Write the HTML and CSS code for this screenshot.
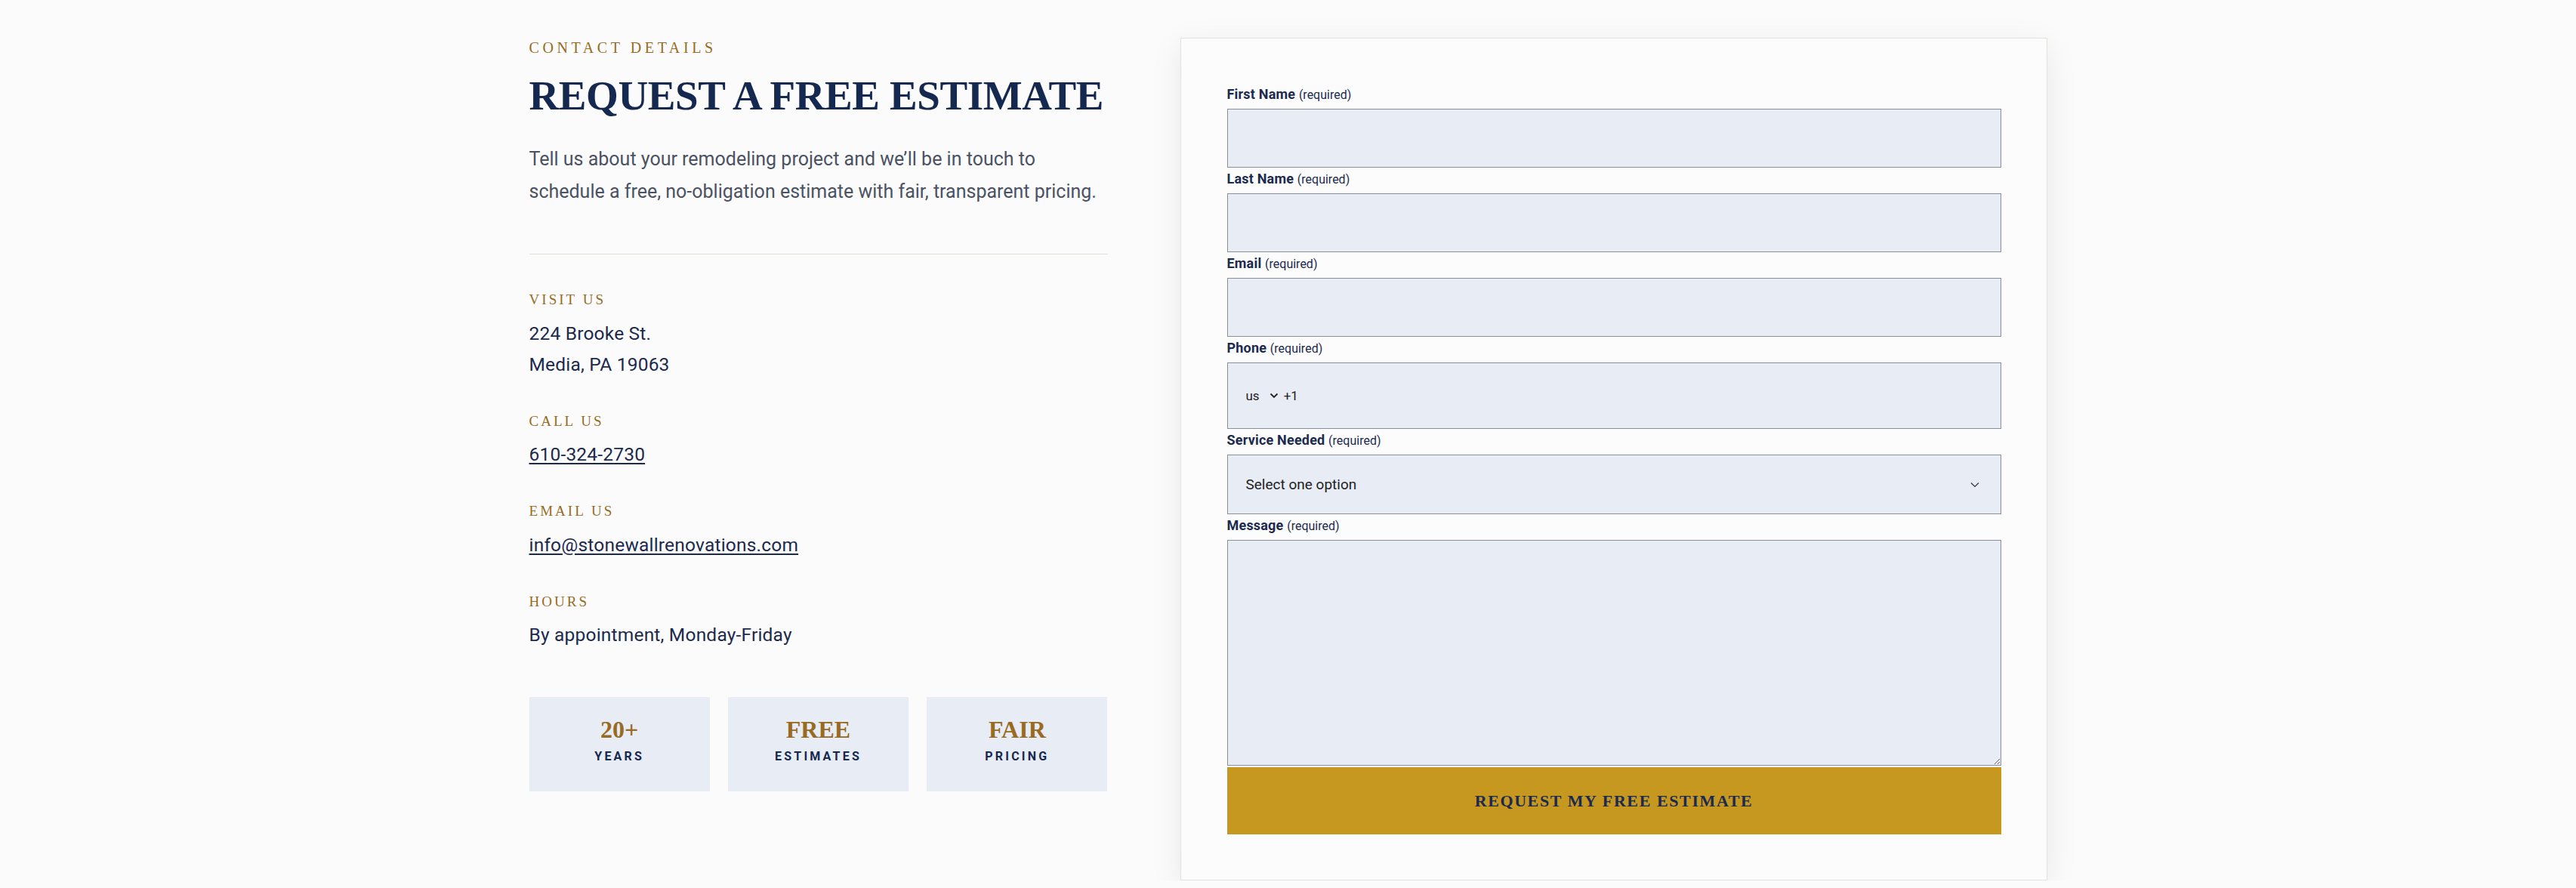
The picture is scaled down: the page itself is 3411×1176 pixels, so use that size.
FILE: index.html
```html
<!DOCTYPE html>
<html lang="en">
<head>
  <meta charset="UTF-8">
  <meta name="viewport" content="width=device-width, initial-scale=1.0">
  <title>Stonewall Renovations | Request a Free Estimate</title>
  <link rel="stylesheet" href="styles.css">
</head>

<body>
  <main class="estimate">
    <div class="estimate-inner">

      <!-- left: contact details -->
      <section class="contact">
        <p class="eyebrow">Contact Details</p>
        <h1 class="title">Request a Free Estimate</h1>
        <p class="intro">Tell us about your remodeling project and we’ll be in touch to schedule a free, no-obligation estimate with fair, transparent pricing.</p>

        <hr class="divider">

        <div class="info">
          <h3 class="info-label">Visit Us</h3>
          <p class="info-value">224 Brooke St.<br>Media, PA 19063</p>
        </div>
        <div class="info">
          <h3 class="info-label">Call Us</h3>
          <p class="info-value"><a href="#">610-324-2730</a></p>
        </div>
        <div class="info">
          <h3 class="info-label">Email Us</h3>
          <p class="info-value"><a href="#">info@stonewallrenovations.com</a></p>
        </div>
        <div class="info">
          <h3 class="info-label">Hours</h3>
          <p class="info-value">By appointment, Monday-Friday</p>
        </div>

        <ul class="stats">
          <li class="stat"><span class="stat-number">20+</span><span class="stat-label">Years</span></li>
          <li class="stat"><span class="stat-number">Free</span><span class="stat-label">Estimates</span></li>
          <li class="stat"><span class="stat-number">Fair</span><span class="stat-label">Pricing</span></li>
        </ul>
      </section>

      <!-- right: estimate form -->
      <section class="form-card">
        <form class="estimate-form">
          <div class="field">
            <label>First Name <span class="req">(required)</span></label>
            <input type="text" class="input">
          </div>
          <div class="field">
            <label>Last Name <span class="req">(required)</span></label>
            <input type="text" class="input">
          </div>
          <div class="field">
            <label>Email <span class="req">(required)</span></label>
            <input type="email" class="input">
          </div>
          <div class="field">
            <label>Phone <span class="req">(required)</span></label>
            <div class="input phone">
              <span class="country">us</span>
              <svg class="country-arrow" width="12" height="8" viewBox="0 0 12 8"><path d="M1.5 1.5 L6 6 L10.5 1.5" fill="none" stroke="#222" stroke-width="1.8"/></svg>
              <span class="dial">+1</span>
              <input type="tel" class="phone-number">
            </div>
          </div>
          <div class="field">
            <label>Service Needed <span class="req">(required)</span></label>
            <div class="select-wrap">
              <select class="input select">
                <option>Select one option</option>
                <option>Kitchen Remodel</option>
                <option>Bathroom Remodel</option>
                <option>Basement Finishing</option>
              </select>
              <svg class="select-arrow" width="12" height="8" viewBox="0 0 12 8"><path d="M1 1.5 L6 6.5 L11 1.5" fill="none" stroke="#333" stroke-width="1.2"/></svg>
            </div>
          </div>
          <div class="field">
            <label>Message <span class="req">(required)</span></label>
            <textarea class="input textarea"></textarea>
          </div>
          <button type="button" class="submit-button">Request My Free Estimate</button>
        </form>
      </section>

    </div>
  </main>
</body>
</html>
```

FILE: styles.css
```css
* {
  box-sizing: border-box;
  margin: 0;
  padding: 0;
}

body {
  background-color: #fbfbfb;
  color: #1b2a4e;
  font-family: Roboto, 'Liberation Sans', sans-serif;
}

.estimate-inner {
  display: flex;
  align-items: flex-start;
  gap: 96px;
  max-width: 2010px;
  margin: 0 auto;
  padding-top: 50px;
}

/* left column */
.contact {
  flex: none;
  width: 766px;
}

.eyebrow {
  color: #986b22;
  font-family: 'Liberation Serif', serif;
  font-size: 20px;
  line-height: 27px;
  letter-spacing: 0.23em;
  text-transform: uppercase;
  margin-bottom: 17px;
}

.title {
  color: #15284f;
  font-family: 'Liberation Serif', serif;
  font-size: 55px;
  font-weight: bold;
  line-height: 66px;
  letter-spacing: -0.4px;
  text-transform: uppercase;
}

.intro {
  color: #4a5263;
  font-size: 25px;
  line-height: 43px;
  margin-top: 29px;
}

.divider {
  border: none;
  border-top: 1px solid #e2dfd7;
  margin: 61px 0 47px;
}

.info {
  margin-bottom: 42px;
}

.info-label {
  color: #986b22;
  font-family: 'Liberation Serif', serif;
  font-size: 19px;
  font-weight: normal;
  line-height: 1.4;
  letter-spacing: 0.16em;
  text-transform: uppercase;
  margin-bottom: 10px;
}

.info-value {
  color: #1b2a4e;
  font-size: 24.5px;
  line-height: 41px;
  letter-spacing: 0.2px;
}

.info-value a {
  color: #1b2a4e;
  text-underline-offset: 3px;
}

.stats {
  list-style: none;
  display: grid;
  grid-template-columns: repeat(3, 1fr);
  gap: 24px;
  margin-top: 62px;
}

.stat {
  background-color: #e8ecf4;
  display: flex;
  flex-direction: column;
  align-items: center;
  padding: 23px 10px 35px;
}

.stat-number {
  color: #986b22;
  font-family: 'Liberation Serif', serif;
  font-size: 32px;
  font-weight: bold;
  line-height: 40px;
  text-transform: uppercase;
}

.stat-label {
  color: #15284f;
  font-size: 16px;
  font-weight: bold;
  line-height: 22px;
  letter-spacing: 0.2em;
  text-transform: uppercase;
  margin-top: 5px;
}

/* right column: the form card */
.form-card {
  flex: 1;
  background-color: #fcfcfc;
  border: 1px solid #e3e1d9;
  box-shadow: 0 10px 40px rgba(20, 30, 70, 0.08);
  padding: 61px 60px 60px 61px;
}

.field {
  margin-bottom: 2px;
}

.field label {
  display: block;
  color: #1b2a4e;
  font-size: 18px;
  font-weight: bold;
  line-height: 25px;
  letter-spacing: 0.2px;
  margin-bottom: 7px;
}

.req {
  font-size: 16px;
  font-weight: normal;
  line-height: 1;
  letter-spacing: 0;
}

.input {
  display: block;
  width: 100%;
  height: 78px;
  background-color: #e8ecf5;
  border: 1px solid #8a8e97;
  border-radius: 0;
  font-family: Roboto, 'Liberation Sans', sans-serif;
  font-size: 18px;
  color: #222;
  padding: 0 24px;
  outline: none;
}

.phone {
  height: 88px;
  display: flex;
  align-items: center;
}

.country {
  font-size: 17px;
  color: #222;
}

.country-arrow {
  margin-left: 13px;
}

.dial {
  font-size: 17px;
  color: #222;
  margin-left: 7px;
}

.phone-number {
  flex: 1;
  height: 100%;
  background: transparent;
  border: none;
  outline: none;
  margin-left: 8px;
}

.select-wrap {
  position: relative;
}

.select {
  height: 79px;
  appearance: none;
  font-size: 19px;
}

.select-arrow {
  position: absolute;
  right: 29px;
  top: 36px;
}

.textarea {
  height: 299px;
  padding: 20px 24px;
  resize: both;
}

.submit-button {
  display: block;
  width: 100%;
  height: 89px;
  background-color: #c6981f;
  border: none;
  color: #1b2a4e;
  font-family: 'Liberation Serif', serif;
  font-size: 22px;
  font-weight: bold;
  letter-spacing: 1.6px;
  text-transform: uppercase;
  cursor: pointer;
}
```
